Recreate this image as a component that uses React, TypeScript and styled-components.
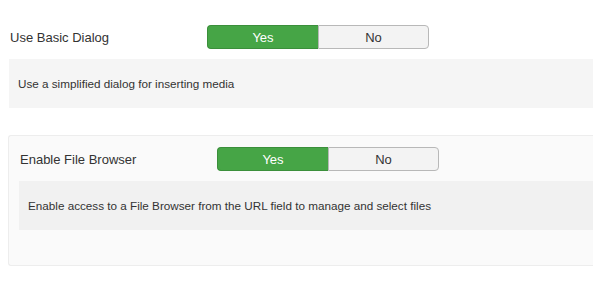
import React from "react";
import styled, { createGlobalStyle } from "styled-components";

const GlobalStyle = createGlobalStyle`
  body {
    margin: 0;
    background: #fff;
    font-family: "Liberation Sans", Arial, sans-serif;
    color: #333;
  }
`;

const Page = styled.div`
  padding: 24px 0 0 8px;
  width: 600px;
  box-sizing: border-box;
`;

const Section = styled.div<{ boxed?: boolean }>`
  background: ${(p) => (p.boxed ? "#fafafa" : "transparent")};
  border: 1px solid ${(p) => (p.boxed ? "#ededed" : "transparent")};
  border-right: none;
  border-radius: 3px 0 0 3px;
  padding: ${(p) => (p.boxed ? "11px 0 35px 10px" : "0")};
  margin-bottom: ${(p) => (p.boxed ? "0" : "26px")};
`;

const Row = styled.div`
  display: flex;
  align-items: center;
  height: 24px;
  margin-bottom: 10px;
`;

const Label = styled.div`
  width: 197px;
  padding-left: 1px;
  font-size: 13px;
  color: #333;
`;

const Toggle = styled.div`
  display: flex;
`;

const Choice = styled.div<{ active?: boolean; first?: boolean }>`
  width: 111px;
  height: 24px;
  box-sizing: border-box;
  display: flex;
  align-items: center;
  justify-content: center;
  font-size: 13px;
  color: ${(p) => (p.active ? "#fff" : "#333")};
  background: ${(p) => (p.active ? "#46a546" : "#f3f3f3")};
  border: 1px solid ${(p) => (p.active ? "#3b8f3b" : "#b8b8b8")};
  border-radius: ${(p) => (p.first ? "4px 0 0 4px" : "0 4px 4px 0")};
  ${(p) => (p.first ? "border-right: none;" : "")}
`;

const Description = styled.div<{ tone: string }>`
  background: ${(p) => p.tone};
  height: 49px;
  display: flex;
  align-items: center;
  padding-left: 9px;
  font-size: 11.7px;
  color: #333;
`;

interface IFieldProps {
  label: string;
  desc: string;
  tone: string;
}

function Field(props: IFieldProps) {
  return (
    <>
      <Row>
        <Label>{props.label}</Label>
        <Toggle>
          <Choice active first>Yes</Choice>
          <Choice>No</Choice>
        </Toggle>
      </Row>
      <Description tone={props.tone}>{props.desc}</Description>
    </>
  );
}

function App() {
  return (
    <>
      <GlobalStyle />
      <Page>
        <Section>
          <Field
            label="Use Basic Dialog"
            desc="Use a simplified dialog for inserting media"
            tone="#f5f5f5"
          />
        </Section>
        <Section boxed>
          <Field
            label="Enable File Browser"
            desc="Enable access to a File Browser from the URL field to manage and select files"
            tone="#f1f1f1"
          />
        </Section>
      </Page>
    </>
  );
}

export default App;
